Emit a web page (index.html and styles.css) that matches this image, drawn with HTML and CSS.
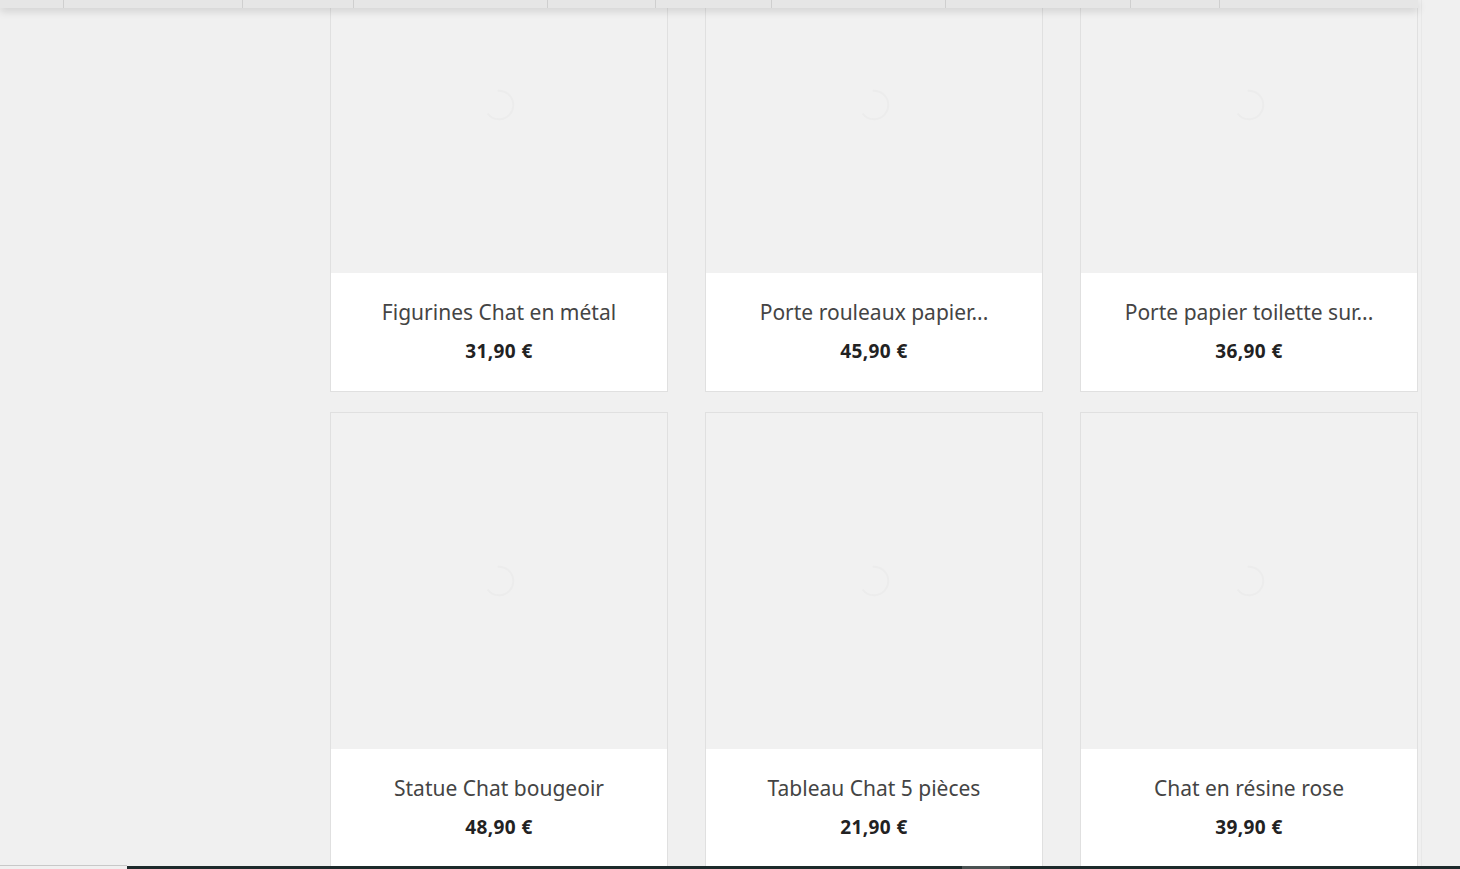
FILE: index.html
```html
<!DOCTYPE html>
<html lang="fr">
	<head>
		<meta charset="utf-8">
		<title>Boutique Chat</title>
		<link rel="stylesheet" href="styles.css">
	</head>
	<body>
		<nav class="topbar">
			<span class="tab" style="width:64px"></span>
			<span class="tab" style="width:179px"></span>
			<span class="tab" style="width:111px"></span>
			<span class="tab" style="width:194px"></span>
			<span class="tab" style="width:108px"></span>
			<span class="tab" style="width:116px"></span>
			<span class="tab" style="width:174px"></span>
			<span class="tab" style="width:185px"></span>
			<span class="tab" style="width:89px"></span>
			<span class="tab last"></span>
		</nav>
		<div class="page">
			<aside class="sidebar"></aside>
			<main class="products">
				<div class="card">
					<div class="thumb"><svg class="loader" viewBox="0 0 40 40"><circle cx="20" cy="20" r="15" /></svg></div>
					<div class="info">
						<h2 class="name">Figurines Chat en métal</h2>
						<div class="price">31,90 €</div>
					</div>
				</div>
				<div class="card">
					<div class="thumb"><svg class="loader" viewBox="0 0 40 40"><circle cx="20" cy="20" r="15" /></svg></div>
					<div class="info">
						<h2 class="name">Porte rouleaux papier...</h2>
						<div class="price">45,90 €</div>
					</div>
				</div>
				<div class="card">
					<div class="thumb"><svg class="loader" viewBox="0 0 40 40"><circle cx="20" cy="20" r="15" /></svg></div>
					<div class="info">
						<h2 class="name">Porte papier toilette sur...</h2>
						<div class="price">36,90 €</div>
					</div>
				</div>
				<div class="card">
					<div class="thumb"><svg class="loader" viewBox="0 0 40 40"><circle cx="20" cy="20" r="15" /></svg></div>
					<div class="info">
						<h2 class="name">Statue Chat bougeoir</h2>
						<div class="price">48,90 €</div>
					</div>
				</div>
				<div class="card">
					<div class="thumb"><svg class="loader" viewBox="0 0 40 40"><circle cx="20" cy="20" r="15" /></svg></div>
					<div class="info">
						<h2 class="name">Tableau Chat 5 pièces</h2>
						<div class="price">21,90 €</div>
					</div>
				</div>
				<div class="card">
					<div class="thumb"><svg class="loader" viewBox="0 0 40 40"><circle cx="20" cy="20" r="15" /></svg></div>
					<div class="info">
						<h2 class="name">Chat en résine rose</h2>
						<div class="price">39,90 €</div>
					</div>
				</div>
			</main>
			<div class="rail"></div>
		</div>
		<div class="bottombar">
			<span class="bottom-left"></span>
			<span class="bottom-dark"><span class="bottom-mark"></span></span>
		</div>
	</body>
</html>
```

FILE: styles.css
```css
html, body {
	margin: 0;
	padding: 0;
	height: 100%;
	overflow: hidden;
}
body {
	background: #f0f0f0;
	font-family: "Noto Sans", "Open Sans", sans-serif;
}
.topbar {
	position: fixed;
	top: 0;
	left: 0;
	width: 1418px;
	height: 8px;
	display: flex;
	background: #e6e6e6;
	box-shadow: 0 3px 9px rgba(0, 0, 0, 0.15);
	z-index: 5;
}
.tab {
	height: 100%;
	border-right: 1px solid #cfcfcf;
	box-sizing: border-box;
}
.tab.last {
	flex: 1;
	border-right: none;
}
.page {
	display: flex;
	margin-top: -64px;
}
.sidebar {
	width: 330px;
	flex: none;
}
.products {
	display: grid;
	grid-template-columns: repeat(3, 338px);
	column-gap: 37px;
	row-gap: 20px;
	align-content: start;
}
.rail {
	width: 1px;
	margin-left: 3px;
	background: #e8e8e8;
	align-self: stretch;
}
.card {
	border: 1px solid #e0e0e0;
	background: #fff;
}
.thumb {
	height: 336px;
	background: #f1f1f1;
	display: flex;
	align-items: center;
	justify-content: center;
}
.loader {
	width: 38px;
	height: 38px;
	transform: rotate(-95deg);
}
.loader circle {
	fill: none;
	stroke: #ececec;
	stroke-width: 2;
	stroke-dasharray: 62 100;
}
.info {
	height: 118px;
	box-sizing: border-box;
	padding-top: 24px;
	text-align: center;
}
.name {
	margin: 0;
	font-size: 21px;
	font-weight: 400;
	line-height: 30px;
	color: #444;
}
.price {
	margin-top: 11px;
	font-size: 19px;
	font-weight: 700;
	line-height: 26px;
	letter-spacing: 0.4px;
	color: #222;
}
.bottombar {
	position: fixed;
	left: 0;
	right: 0;
	bottom: 0;
	height: 4px;
	display: flex;
	z-index: 5;
}
.bottom-left {
	width: 127px;
	border-top: 1px solid #c8c8c8;
	background: #f0f0f0;
}
.bottom-dark {
	flex: 1;
	margin-top: 1px;
	background: #1d2a2b;
	display: flex;
	padding-left: 835px;
}
.bottom-mark {
	width: 48px;
	background: #4a5252;
}
```
